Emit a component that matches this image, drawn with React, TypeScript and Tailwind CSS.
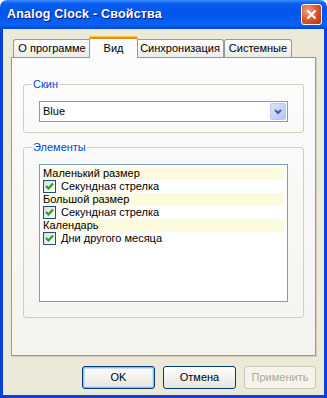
const rows = [
  { label: 'Маленький размер', header: true },
  { label: 'Секундная стрелка', checked: true },
  { label: 'Большой размер', header: true },
  { label: 'Секундная стрелка', checked: true },
  { label: 'Календарь', header: true },
  { label: 'Дни другого месяца', checked: true },
]

const tabs = [
  { label: 'О программе', w: 'w-[78px]' },
  { label: 'Вид', w: 'w-[49px]' },
  { label: 'Синхронизация', w: 'w-[88px]' },
  { label: 'Системные', w: 'w-[68px]' },
]

function Check() {
  return (
    <span className="shrink-0 w-[13px] h-[13px] border border-[#1c5180] bg-gradient-to-br from-[#dcdcd7] to-white flex items-center justify-center">
      <svg width="9" height="9" viewBox="0 0 9 9">
        <path d="M1 4 L3.5 6.5 L8 1.5" stroke="#21a121" strokeWidth="2.2" fill="none" />
      </svg>
    </span>
  )
}

export default function App() {
  const active = 1
  return (
    <div className="w-[327px] h-[398px] bg-white flex flex-col text-[11px] text-black" style={{ fontFamily: '"Liberation Sans", Arial, sans-serif' }}>
      {/* заголовок окна */}
      <div className="h-[29px] shrink-0 rounded-t-[7px] flex items-center pl-[7px] pr-[5px] bg-[linear-gradient(to_bottom,#3b8eff_0%,#0a5ff0_12%,#0055ea_45%,#0a62f5_85%,#0047d6_100%)]">
        <span className="text-white font-bold text-[12.5px] tracking-[0.2px] flex-1 whitespace-nowrap [text-shadow:1px_1px_#0a1883]">
          Analog Clock - Свойства
        </span>
        <button className="w-[21px] h-[21px] rounded-[3px] border border-white bg-[radial-gradient(circle_at_30%_30%,#f0a080,#d9502a_55%,#b83413)] flex items-center justify-center">
          <svg width="11" height="11" viewBox="0 0 11 11">
            <path d="M1.5 1.5 L9.5 9.5 M9.5 1.5 L1.5 9.5" stroke="white" strokeWidth="2.2" />
          </svg>
        </button>
      </div>

      <div className="flex-1 bg-[#0842d8] px-[3px] pb-[3px] flex flex-col">
        <div className="flex-1 bg-[#ece9d8] flex flex-col px-[8px] pt-[8px]">
          {/* вкладки */}
          <div className="flex items-end pl-[2px] h-[20px] relative z-10">
            {tabs.map((t, i) =>
              i === active ? (
                <div key={t.label} className={`${t.w} shrink-0 h-[21px] -mb-px -mx-[2px] bg-[#fcfcfe] border-x border-[#919b9c] rounded-t-[3px] relative z-10 flex justify-center`}>
                  <div className="absolute -top-px -left-px -right-px h-[3px] rounded-t-[3px] bg-[#e68b2c] border-t border-[#ffc83c]"></div>
                  <span className="pt-[3px] whitespace-nowrap">{t.label}</span>
                </div>
              ) : (
                <div key={t.label} className={`${t.w} shrink-0 h-[18px] border border-b-0 border-[#919b9c] rounded-t-[3px] bg-gradient-to-b from-white to-[#ecebe5] flex items-center justify-center whitespace-nowrap`}>
                  {t.label}
                </div>
              )
            )}
          </div>

          {/* панель */}
          <div className="h-[299px] shrink-0 border border-[#919b9c] shadow-[1px_1px_0_#d0cec0] bg-gradient-to-b from-[#fcfcfe] to-[#f4f3ee] px-[11px] pt-[20px]">
            <fieldset className="border border-[#d0d0bf] rounded-[3px] h-[55px] px-[15px] pt-[11px]">
              <legend className="text-[#0046d5] px-[1px] ml-[-7px] leading-[12px]">Скин</legend>
              <div className="h-[21px] border border-[#7f9db9] bg-white flex items-center pl-[3px] pr-[1px]">
                <span className="flex-1">Blue</span>
                <span className="w-[16px] h-[17px] rounded-[2px] border border-[#b8c9f6] bg-gradient-to-br from-[#dbe6fd] to-[#b0c6f6] flex items-center justify-center">
                  <svg width="8" height="6" viewBox="0 0 8 6">
                    <path d="M1 1 L4 4 L7 1" stroke="#4d6185" strokeWidth="2" fill="none" />
                  </svg>
                </span>
              </div>
            </fieldset>

            <fieldset className="border border-[#d0d0bf] rounded-[3px] h-[177px] mt-[8px] px-[15px] pt-[11px]">
              <legend className="text-[#0046d5] px-[1px] ml-[-7px] leading-[12px]">Элементы</legend>
              <div className="h-[138px] border border-[#7f9db9] bg-white pt-[2px] px-[3px] flex flex-col">
                {rows.map((r, i) => (
                  <div key={i} className={`h-[13px] shrink-0 flex items-center gap-[5px] whitespace-nowrap ${r.header ? 'bg-[#fcfbde]' : ''}`}>
                    {!r.header && <Check />}
                    <span className="block leading-[13px]">{r.label}</span>
                  </div>
                ))}
              </div>
            </fieldset>
          </div>

          {/* кнопки */}
          <div className="flex justify-end gap-[8px] mt-[10px]">
            <button className="w-[73px] h-[23px] rounded-[3px] border border-[#003c74] bg-gradient-to-b from-white to-[#e6e5de] shadow-[inset_0_0_0_1px_#98b8ea,inset_0_0_0_2px_#cde0f8]">OK</button>
            <button className="w-[73px] h-[23px] rounded-[3px] border border-[#003c74] bg-gradient-to-b from-white to-[#e6e5de]">Отмена</button>
            <button className="w-[72px] h-[23px] rounded-[3px] border border-[#c9c7ba] bg-[#f5f4ea] text-[#aca899]">Применить</button>
          </div>
        </div>
      </div>
    </div>
  )
}
